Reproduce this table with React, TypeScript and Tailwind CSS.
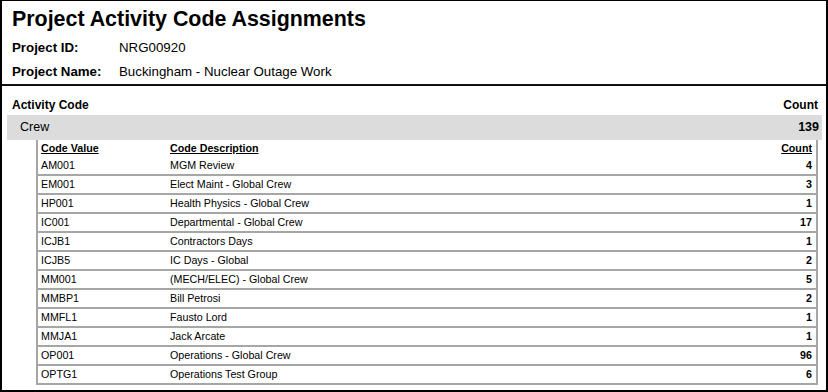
const rows: [string, string, number][] = [
  ["AM001", "MGM Review", 4],
  ["EM001", "Elect Maint - Global Crew", 3],
  ["HP001", "Health Physics - Global Crew", 1],
  ["IC001", "Departmental - Global Crew", 17],
  ["ICJB1", "Contractors Days", 1],
  ["ICJB5", "IC Days - Global", 2],
  ["MM001", "(MECH/ELEC) - Global Crew", 5],
  ["MMBP1", "Bill Petrosi", 2],
  ["MMFL1", "Fausto Lord", 1],
  ["MMJA1", "Jack Arcate", 1],
  ["OP001", "Operations - Global Crew", 96],
  ["OPTG1", "Operations Test Group", 6],
];

export default function App() {
  return (
    <div className="h-[392px] w-[828px] overflow-hidden bg-white font-['Liberation_Sans',Arial,sans-serif] text-black">
      <div className="flex h-full flex-col border-x-2 border-t border-b-2 border-black">
        {/* Header */}
        <div className="px-[10px] pt-[5px]">
          <h1 className="text-[21.4px] leading-[26px] font-bold">Project Activity Code Assignments</h1>
          <div className="mt-[6px] flex h-[20px] items-center text-[13.3px]">
            <span className="w-[107px] font-bold">Project ID:</span>
            <span>NRG00920</span>
          </div>
          <div className="mt-[4px] flex h-[20px] items-center text-[13.3px]">
            <span className="w-[107px] font-bold">Project Name:</span>
            <span>Buckingham - Nuclear Outage Work</span>
          </div>
        </div>
        <div className="mt-[2px] h-[1.5px] bg-[#111]" />

        {/* Activity codes */}
        <div className="pr-[4px] pl-[5px]">
          <div className="mt-[10px] flex h-[18px] items-center justify-between pr-[4px] pl-[5px] text-[12px] font-bold">
            <span>Activity Code</span>
            <span>Count</span>
          </div>
          <div className="mt-[1.5px] flex h-[25px] items-center justify-between bg-[#dcdcdc] pr-[3px] pl-[13px] text-[12.5px]">
            <span>Crew</span>
            <span className="font-bold">139</span>
          </div>

          <div className="mr-[4px] ml-[29px] border-x-2 border-[#a6a6a6] text-[10.7px]">
            <div className="flex h-[17px] items-center font-bold underline">
              <span className="w-[132px] pl-[3px]">Code Value</span>
              <span className="flex-1">Code Description</span>
              <span className="pr-[4px]">Count</span>
            </div>
            {rows.map(([code, desc, count]) => (
              <div key={code} className="flex h-[19px] items-center border-b-2 border-[#a6a6a6]">
                <span className="w-[132px] pl-[3px]">{code}</span>
                <span className="flex-1">{desc}</span>
                <span className="pr-[4px] font-bold">{count}</span>
              </div>
            ))}
          </div>
        </div>
      </div>
    </div>
  );
}
